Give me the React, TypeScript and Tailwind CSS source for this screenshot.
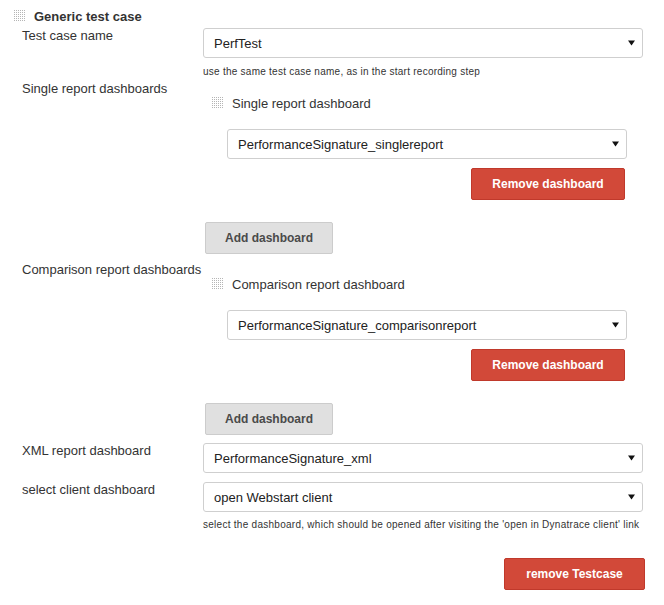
const Grip = () => (
  <svg width="12" height="12" viewBox="0 0 12 12" className="shrink-0">
    {[0, 2, 4, 6, 8, 10].map((y) =>
      [0, 2, 4, 6, 8, 10].map((x) => <rect key={`${x}-${y}`} x={x} y={y} width="1" height="1" fill="#b5b5b5" />)
    )}
  </svg>
)

const Select = ({ value, className = '' }: { value: string; className?: string }) => (
  <div
    className={`h-[30px] flex items-center justify-between pl-[10px] pr-[7px] bg-white border border-[#cfcfcf] rounded-[3px] text-[13px] text-[#222] ${className}`}
  >
    <span>{value}</span>
    <svg width="7" height="6" viewBox="0 0 7 6">
      <path d="M0 0.5 L7 0.5 L3.5 5.5 Z" fill="#111" />
    </svg>
  </div>
)

const RedButton = ({ label, className = '' }: { label: string; className?: string }) => (
  <div
    className={`h-[32px] flex items-center justify-center bg-[#d24939] border border-[#c0392b] rounded-[2px] text-white text-[12px] font-bold ${className}`}
  >
    {label}
  </div>
)

const AddButton = () => (
  <div className="ml-[2px] mt-[22px] w-[128px] h-[32px] flex items-center justify-center bg-[#e0e0e0] border border-[#cccccc] rounded-[2px] text-[#4a4a4a] text-[12px] font-bold">
    Add dashboard
  </div>
)

const Row = ({ label, className = '', children }: { label: string; className?: string; children: React.ReactNode }) => (
  <div className={`flex ${className}`}>
    <div className="w-[181px] shrink-0">{label}</div>
    <div className="w-[440px]">{children}</div>
  </div>
)

const DashboardBlock = ({ title, value }: { title: string; value: string }) => (
  <div className="pt-[14px]">
    <div className="flex items-center h-[16px] pl-[9px] gap-[8px]">
      <Grip />
      <span>{title}</span>
    </div>
    <Select value={value} className="mt-[18px] ml-[24px] w-[400px]" />
    <RedButton label="Remove dashboard" className="mt-[9px] ml-[268px] w-[154px]" />
    <AddButton />
  </div>
)

export default function App() {
  return (
    <div className="w-[664px] h-[605px] bg-white text-[#333] text-[13px] leading-[15px] font-['Liberation_Sans',Arial,sans-serif] overflow-hidden">
      <div className="mt-[8px] ml-[14px] flex items-center h-[16px] gap-[8px]">
        <Grip />
        <span className="font-bold">Generic test case</span>
      </div>

      <div className="pl-[22px]">
        <Row label="Test case name" className="mt-[4px]">
          <Select value="PerfTest" />
          <div className="mt-[8px] text-[10px] leading-[12px] tracking-[0.25px] text-[#333]">
            use the same test case name, as in the start recording step
          </div>
        </Row>

        <Row label="Single report dashboards" className="mt-[3px]">
          <DashboardBlock title="Single report dashboard" value="PerformanceSignature_singlereport" />
        </Row>

        <Row label="Comparison report dashboards" className="mt-[8px]">
          <DashboardBlock title="Comparison report dashboard" value="PerformanceSignature_comparisonreport" />
        </Row>

        <Row label="XML report dashboard" className="mt-[8px]">
          <Select value="PerformanceSignature_xml" />
        </Row>

        <Row label="select client dashboard" className="mt-[9px]">
          <Select value="open Webstart client" />
          <div className="mt-[7px] text-[10px] leading-[12px] tracking-[0.27px] text-[#333] whitespace-nowrap">
            select the dashboard, which should be opened after visiting the 'open in Dynatrace client' link
          </div>
        </Row>
      </div>

      <div className="flex justify-end pr-[19px] mt-[27px]">
        <RedButton label="remove Testcase" className="w-[141px]" />
      </div>
    </div>
  )
}
